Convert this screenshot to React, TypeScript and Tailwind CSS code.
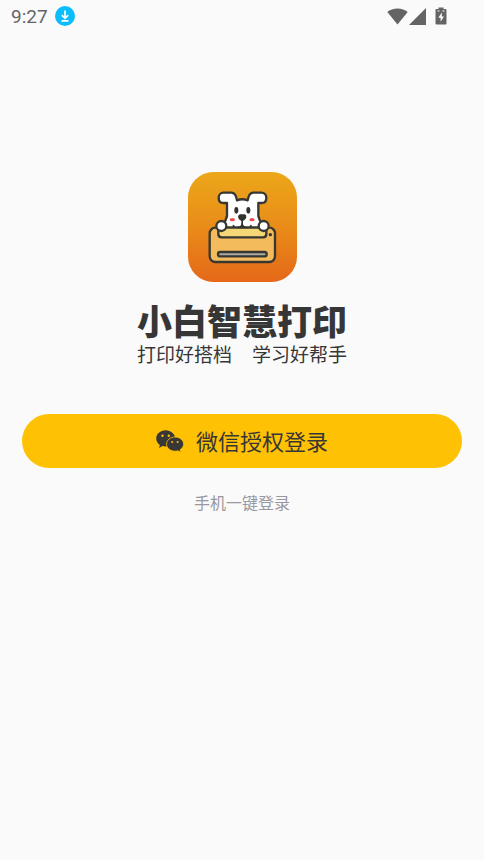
import React from 'react';

const DownloadBadge: React.FC = () => (
  <svg viewBox="0 0 20 20" className="w-5 h-5" aria-hidden="true">
    <circle cx="10" cy="10" r="10" fill="#0cbdfd" />
    <path d="M10 4.5v7.5M6.8 9.2L10 12.3l3.2-3.1M6.5 14.8h7" fill="none" stroke="#fff" strokeWidth="1.7" />
  </svg>
);

const WifiIcon: React.FC = () => (
  <svg viewBox="0 0 21 17" className="w-[21px] h-[17px]" fill="#646464" aria-hidden="true">
    <path d="M10.5 16.5L0.3 4C3 1.700 6.600 0.400 10.500 0.400S18 1.700 20.700 4z" />
  </svg>
);

const SignalIcon: React.FC = () => (
  <svg viewBox="0 0 17 17" className="w-[17px] h-[17px]" fill="#646464" aria-hidden="true">
    <path d="M17 0v17H0z" />
  </svg>
);

const BatteryIcon: React.FC = () => (
  <svg viewBox="0 0 12 18" className="w-3 h-[18px]" aria-hidden="true">
    <path d="M3.500 0.500h5V2h2Q11.500 2 11.500 3v13.500Q11.500 17.500 10.500 17.500h-9Q0.500 17.500 0.500 16.500V3Q0.500 2 1.500 2h2z" fill="#646464" />
    <path d="M2.500 4h2M7.500 4h2" stroke="#fafafa" strokeWidth="1" />
    <path d="M6.800 5.500L3.300 10.800h2.300v4L8.900 9.500H6.800z" fill="#fafafa" />
  </svg>
);

const StatusBar: React.FC = () => (
  <header className="flex items-center h-8 pl-[11px] pr-[37px] shrink-0">
    <span className="mt-0.5 text-[19px] leading-6 text-[#646464] font-['Roboto',sans-serif]">9:27</span>
    <span className="ml-[7px]"><DownloadBadge /></span>
    <div className="ml-auto flex items-center">
      <WifiIcon />
      <span className="ml-px"><SignalIcon /></span>
      <span className="ml-[9px]"><BatteryIcon /></span>
    </div>
  </header>
);

// White puppy holding on to the top of a printer
const AppLogo: React.FC = () => (
  <svg viewBox="17 17 327 330" className="w-[109px] h-[110px]" role="img" aria-label="小白智慧打印">
    <defs>
      <linearGradient id="logoBg" x1="0" y1="0" x2="0" y2="1">
        <stop offset="0" stopColor="#eca719" />
        <stop offset="0.5" stopColor="#e98c19" />
        <stop offset="1" stopColor="#e56818" />
      </linearGradient>
    </defs>
    <rect x="17" y="17" width="327" height="330" rx="76" fill="url(#logoBg)" />
    <g stroke="#383833" strokeWidth="7" strokeLinejoin="round" strokeLinecap="round">
      <path
        d="M123 79H147C158 79 162 88 164 102C174 98 186 98 196 102C198 88 202 79 213 79H237C246 79 252 86 252 94C252 104 246 110 238 110H228V149L234 166V190H128V166L134 149V110H124C115 110 109 104 109 94C109 86 115 79 123 79Z"
        fill="#fff"
      />
      <rect x="82" y="184" width="196" height="103" rx="17" fill="#f4bb5c" />
      <path d="M108 184H252V203Q252 213 242 213H118Q108 213 108 203Z" fill="#f4d878" />
      <rect x="107" y="257" width="146" height="13" rx="6.500" fill="#a9aaa4" />
      <circle cx="117" cy="179" r="15" fill="#fff" />
      <circle cx="244" cy="179" r="15" fill="#fff" />
    </g>
    <g fill="#32322f">
      <ellipse cx="162" cy="132" rx="6" ry="10" />
      <ellipse cx="198" cy="132" rx="6" ry="10" />
      <path d="M173 144H187Q193 146 192 153Q191 159 182 164V176H177V164Q168 159 167 153Q167 145 173 144Z" />
      <path d="M151 184V176Q155 174 158 181ZM208 184V176Q204 174 201 181Z" />
      <path d="M164 182Q176 182 178 170H181Q183 182 195 182V186H164Z" />
      <circle cx="264" cy="205" r="5" />
    </g>
    <g fill="#ef4b51">
      <ellipse cx="150" cy="160" rx="8" ry="5" />
      <ellipse cx="209" cy="160" rx="8" ry="5" />
    </g>
  </svg>
);

const WechatIcon: React.FC = () => (
  <svg viewBox="0 0 28 22" className="w-7 h-[22px]" aria-hidden="true">
    <path d="M9.600 0.300C4.400 0.300 0.200 3.900 0.200 8.500c0 2.600 1.400 4.900 3.700 6.400L3 18l3.500-1.900c1 .3 2 .4 3.100.4 5.200 0 9.600-3.500 9.600-8S14.800 0.300 9.600 0.300z" fill="#393735" />
    <path d="M19 7c-4.700 0-8.500 3.200-8.500 7.100s3.800 7.100 8.500 7.100c1 0 2-.1 2.900-.4l3 1.500-.8-2.600c2.100-1.300 3.500-3.300 3.500-5.600C27.600 10.200 23.700 7 19 7z" fill="#393735" stroke="#ffc103" strokeWidth="0.800" />
    <g fill="#ffc103">
      <circle cx="6.500" cy="5.800" r="1.200" />
      <circle cx="12.800" cy="5.800" r="1.200" />
      <circle cx="16.200" cy="12" r="1" />
      <circle cx="21.600" cy="12" r="1" />
    </g>
  </svg>
);

const App: React.FC = () => {
  return (
    <div className="flex flex-col min-h-screen bg-[#fafafa] text-[#363636] font-['Noto_Sans_CJK_SC',sans-serif]">
      <StatusBar />

      <main className="flex flex-col items-center px-[22px] pt-[140px]">
        <AppLogo />
        <h1 className="mt-4 text-[35px] leading-[44px] font-black">小白智慧打印</h1>
        <p className="flex gap-5 text-[19px] leading-6">
          <span>打印好搭档</span>
          <span>学习好帮手</span>
        </p>

        <button
          type="button"
          className="mt-12 w-full h-[54px] flex items-center justify-center gap-3 rounded-full bg-[#ffc103] text-[22px] leading-8"
        >
          <WechatIcon />
          <span className="pb-0.5">微信授权登录</span>
        </button>

        <button type="button" className="mt-[22px] text-base leading-6 text-[#9998a0]">
          手机一键登录
        </button>
      </main>
    </div>
  );
};

export default App;
